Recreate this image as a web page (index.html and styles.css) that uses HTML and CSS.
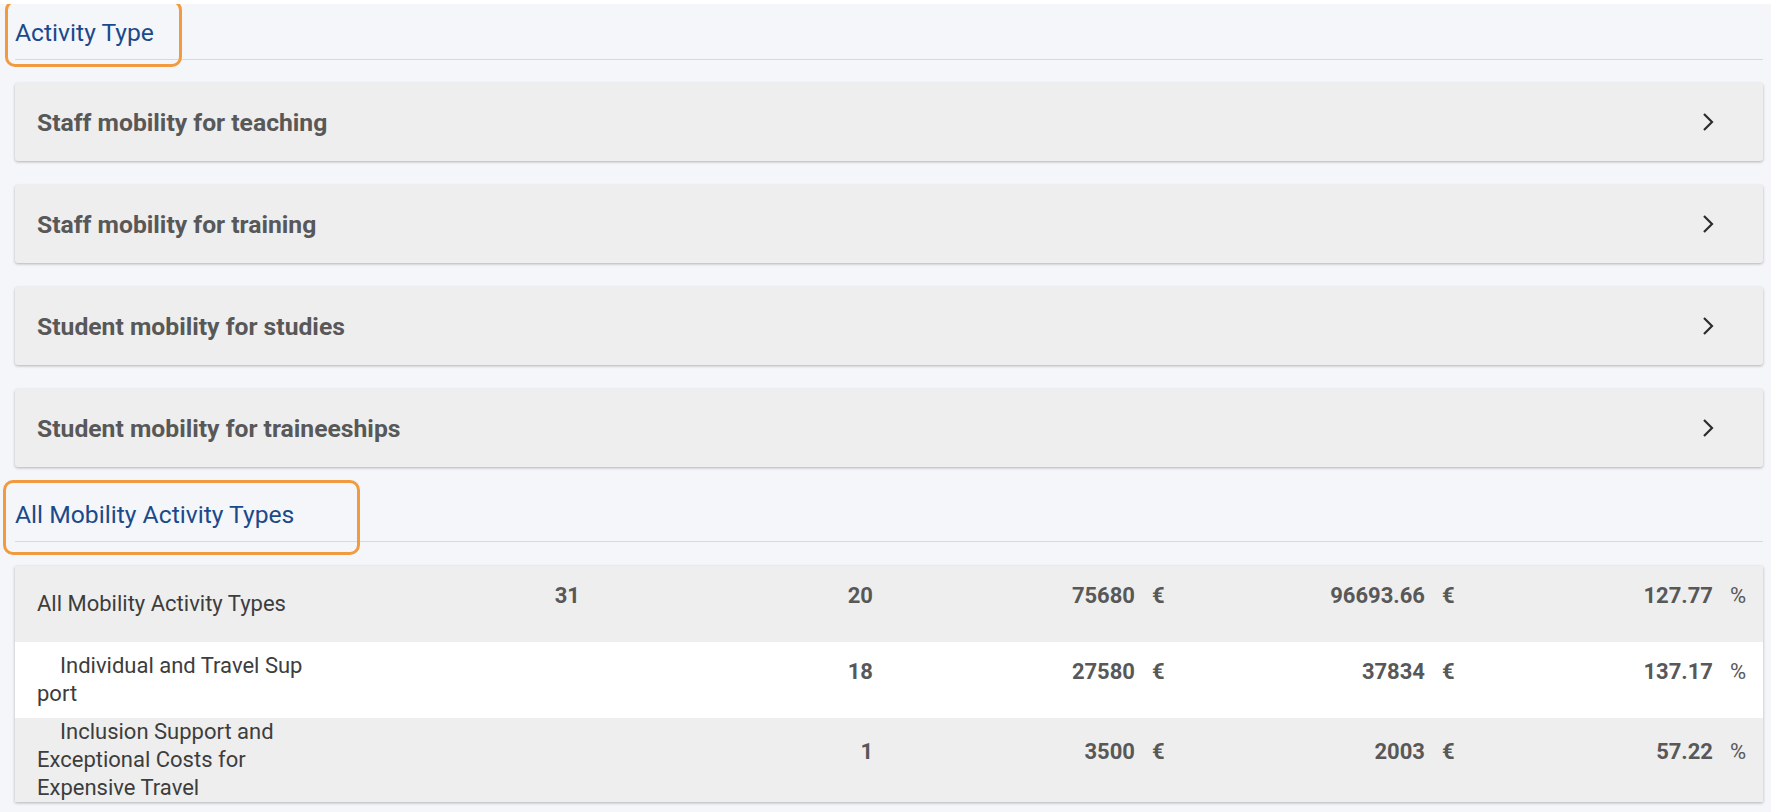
FILE: index.html
```html
<!DOCTYPE html>
<html lang="en">
<head>
    <meta charset="UTF-8">
    <meta name="viewport" content="width=device-width, initial-scale=1.0">
    <title>Mobility Activity Types</title>
    <link rel="stylesheet" href="styles.css">
</head>
<body>
    <div class="page">
        <section class="group">
            <div class="group-head">
                <h2>Activity Type</h2>
                <span class="highlight hl-activity"></span>
            </div>
            <div class="cards">
                <div class="card">
                    <span>Staff mobility for teaching</span>
                    <svg class="chevron" width="14" height="20" viewBox="0 0 14 20"><polyline points="3,2 11,10 3,18"/></svg>
                </div>
                <div class="card">
                    <span>Staff mobility for training</span>
                    <svg class="chevron" width="14" height="20" viewBox="0 0 14 20"><polyline points="3,2 11,10 3,18"/></svg>
                </div>
                <div class="card">
                    <span>Student mobility for studies</span>
                    <svg class="chevron" width="14" height="20" viewBox="0 0 14 20"><polyline points="3,2 11,10 3,18"/></svg>
                </div>
                <div class="card">
                    <span>Student mobility for traineeships</span>
                    <svg class="chevron" width="14" height="20" viewBox="0 0 14 20"><polyline points="3,2 11,10 3,18"/></svg>
                </div>
            </div>
        </section>

        <section class="group">
            <div class="group-head second">
                <h2>All Mobility Activity Types</h2>
                <span class="highlight hl-all"></span>
            </div>
            <table class="summary">
                <colgroup>
                    <col class="c-label">
                    <col class="c-a">
                    <col class="c-b">
                    <col class="c-c">
                    <col class="c-unit">
                    <col class="c-d">
                    <col class="c-unit">
                    <col class="c-e">
                    <col class="c-unit-last">
                </colgroup>
                <tbody>
                    <tr class="row-grey">
                        <td class="label">All Mobility Activity Types</td>
                        <td class="num">31</td>
                        <td class="num">20</td>
                        <td class="num">75680</td>
                        <td class="unit">€</td>
                        <td class="num">96693.66</td>
                        <td class="unit">€</td>
                        <td class="num">127.77</td>
                        <td class="unit pct">%</td>
                    </tr>
                    <tr class="row-white">
                        <td class="label sub">Individual and Travel Sup<wbr>port</td>
                        <td class="num"></td>
                        <td class="num">18</td>
                        <td class="num">27580</td>
                        <td class="unit">€</td>
                        <td class="num">37834</td>
                        <td class="unit">€</td>
                        <td class="num">137.17</td>
                        <td class="unit pct">%</td>
                    </tr>
                    <tr class="row-grey">
                        <td class="label sub">Inclusion Support and Exceptional Costs for Expensive Travel</td>
                        <td class="num"></td>
                        <td class="num">1</td>
                        <td class="num">3500</td>
                        <td class="unit">€</td>
                        <td class="num">2003</td>
                        <td class="unit">€</td>
                        <td class="num">57.22</td>
                        <td class="unit pct">%</td>
                    </tr>
                </tbody>
            </table>
        </section>
    </div>
</body>
</html>
```

FILE: styles.css
```css
body {
    margin: 0;
    font-family: Roboto, "Liberation Sans", Arial, sans-serif;
    background-color: #f5f6fa;
    border-top: 4px solid #ffffff;
}
.page {
    padding: 0 8px 10px 15px;
}
.group-head {
    position: relative;
    padding: 15px 0 12px 0;
    border-bottom: 1px solid #d6d9df;
}
.group-head h2 {
    margin: 0;
    font-size: 24.7px;
    line-height: 28px;
    font-weight: 400;
    color: #1b4a8a;
}
.group-head.second {
    margin-top: 19px;
}
.highlight {
    position: absolute;
    border: 3px solid #f29a3f;
    border-radius: 10px;
    box-sizing: border-box;
}
.hl-activity {
    left: -10px;
    top: -4px;
    width: 177px;
    height: 67px;
}
.hl-all {
    left: -12px;
    top: -6px;
    width: 357px;
    height: 75px;
}
.cards {
    display: flex;
    flex-direction: column;
    gap: 24px;
    margin-top: 23px;
}
.card {
    display: flex;
    align-items: center;
    justify-content: space-between;
    height: 78px;
    padding: 0 48px 0 22px;
    background-color: #eeeeee;
    border-radius: 3px;
    box-shadow: 0 1px 3px rgba(0, 0, 0, 0.28);
    font-size: 24.7px;
    font-weight: 700;
    color: #585858;
}
.chevron polyline {
    fill: none;
    stroke: #2b2b2b;
    stroke-width: 2.2;
}
.summary {
    width: 100%;
    margin-top: 24px;
    border-collapse: collapse;
    table-layout: fixed;
    box-shadow: 0 1px 3px rgba(0, 0, 0, 0.28);
    font-size: 22px;
    color: #585858;
}
.c-label { width: 315px; }
.c-a { width: 250px; }
.c-b { width: 293px; }
.c-c { width: 262px; }
.c-unit { width: 45px; }
.c-d { width: 245px; }
.c-e { width: 243px; }
.c-unit-last { width: 50px; }
.row-grey {
    background-color: #eeeeee;
}
.row-white {
    background-color: #ffffff;
}
.summary td {
    padding: 0;
    line-height: 28px;
    vertical-align: middle;
}
.summary td.label {
    height: 76px;
    padding: 0 12px 0 22px;
    color: #3d3d3d;
}
.summary td.sub {
    text-indent: 23px;
}
.summary td.num {
    padding-bottom: 17px;
    text-align: right;
    font-weight: 700;
}
.summary td.unit {
    padding: 0 0 17px 17px;
    font-weight: 700;
}
.summary td.pct {
    font-weight: 400;
}
```
